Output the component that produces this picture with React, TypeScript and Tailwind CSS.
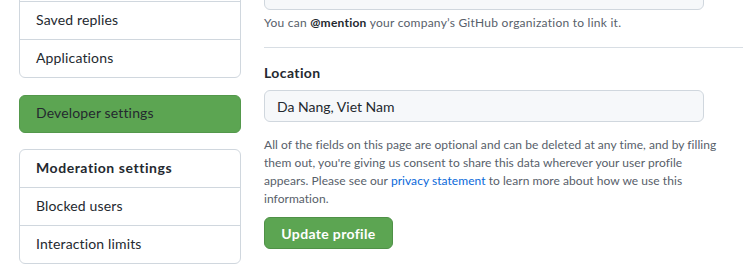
import React from "react";

const font = { fontFamily: "Lato, 'Noto Sans', sans-serif" };

function NavRow({ label, bold = false, first = false }: { label: string; bold?: boolean; first?: boolean }) {
  return (
    <div
      className={`flex items-center px-4 pb-[2px] text-[14px] text-[#24292f] ${first ? "h-[37px]" : "h-[38px] border-t border-[#d0d7de]"} ${bold ? "font-bold tracking-[0.55px]" : "tracking-[0.15px]"}`}
    >
      {label}
    </div>
  );
}

export default function App() {
  return (
    <div className="flex w-[749px] h-[280px] overflow-hidden bg-white" style={font}>
      {/* sidebar */}
      <div className="ml-[19px] flex w-[222px] flex-col">
        <div className="-mt-[37px] overflow-hidden rounded-md border border-[#d0d7de]">
          <NavRow label="" first />
          <NavRow label="Saved replies" />
          <NavRow label="Applications" />
        </div>
        <div className="mt-[17px] flex h-[38px] items-center rounded-md border border-[#53984b] bg-[#5ca552] px-4 pb-[3px] text-[14px] tracking-[0.15px] text-[#24292f]">
          Developer settings
        </div>
        <div className="mt-[16px] overflow-hidden rounded-md border border-[#d0d7de]">
          <NavRow label="Moderation settings" bold first />
          <NavRow label="Blocked users" />
          <NavRow label="Interaction limits" />
        </div>
      </div>

      {/* main */}
      <div className="ml-[23px] flex w-[479px] flex-col">
        <div className="-mt-[22px] h-[32px] w-[440px] rounded-md border border-[#d0d7de] bg-[#f6f8fa]" />
        <p className="mt-[4px] text-[12px] leading-[18px] tracking-[0.25px] text-[#57606a]">
          You can <span className="font-bold text-[#24292f]">@mention</span> your company’s GitHub organization to link it.
        </p>
        <div className="mt-[15px] border-t border-[#d8dee4]" />
        <label className="mt-[15px] text-[14px] leading-[20px] font-bold tracking-[0.4px] text-[#24292f]">Location</label>
        <div className="mt-[7px] flex h-[32px] w-[440px] items-center rounded-md border border-[#d0d7de] bg-[#f6f8fa] px-3 text-[14px] text-[#24292f]">
          Da Nang, Viet Nam
        </div>
        <p className="mt-[14px] whitespace-nowrap text-[12px] leading-[18px] tracking-[0.05px] text-[#57606a]">
          All of the fields on this page are optional and can be deleted at any time, and by filling
          <br />
          them out, you're giving us consent to share this data wherever your user profile
          <br />
          appears. Please see our <a className="text-[#0969da]">privacy statement</a> to learn more about how we use this
          <br />
          information.
        </p>
        <button className="mt-[9px] flex h-[32px] w-[129px] items-center justify-center rounded-md border border-[#4f9147] bg-[#5ca552] text-[14px] font-bold tracking-[0.35px] text-white">
          Update profile
        </button>
      </div>
    </div>
  );
}
